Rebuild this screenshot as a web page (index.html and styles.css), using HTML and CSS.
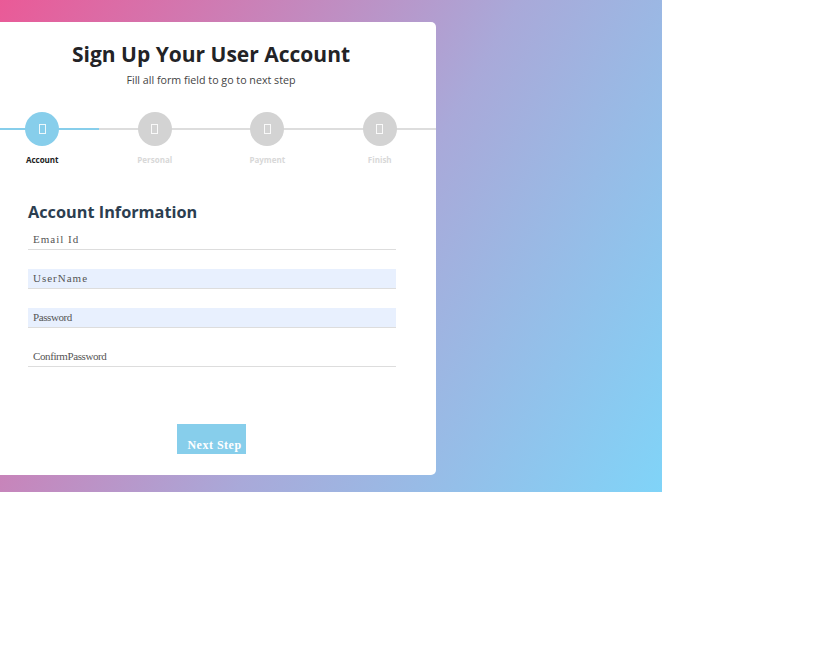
FILE: index.html
```html
<!DOCTYPE html>
<html lang="en">
<head>
    <meta charset="UTF-8">
    <meta name="viewport" content="width=device-width, initial-scale=1.0">
    <title>Sign Up Your User Account</title>
    <link rel="stylesheet" href="styles.css">
</head>
<body>
    <div class="wrapper">
        <div class="card">
            <h2 class="title">Sign Up Your User Account</h2>
            <p class="subtitle">Fill all form field to go to next step</p>

            <ul class="progressbar">
                <li class="active"><span class="step"><i class="icon"></i></span><strong>Account</strong></li>
                <li><span class="step"><i class="icon"></i></span><strong>Personal</strong></li>
                <li><span class="step"><i class="icon"></i></span><strong>Payment</strong></li>
                <li><span class="step"><i class="icon"></i></span><strong>Finish</strong></li>
            </ul>

            <form class="form-card">
                <h2 class="fs-title">Account Information</h2>
                <input type="email" name="email" placeholder="Email Id">
                <input type="text" name="uname" class="filled" placeholder="UserName">
                <input type="text" name="pwd" class="filled tight" placeholder="Password">
                <input type="text" name="cpwd" class="tight" placeholder="ConfirmPassword">
                <div class="actions">
                    <button type="button" class="next">Next Step</button>
                </div>
            </form>
        </div>
    </div>
</body>
</html>
```

FILE: styles.css
```css
body {
    margin: 0;
    padding: 0;
    font-family: "Open Sans", sans-serif;
    background: #fff;
}

.wrapper {
    width: 662px;
    height: 492px;
    overflow: hidden;
    padding-top: 22px;
    box-sizing: border-box;
    background: linear-gradient(120deg, #ea5a97 0%, #a9a9d9 55%, #80d4f8 100%);
}

.card {
    width: 450px;
    height: 453px;
    margin-left: -14px;
    background: #fff;
    border-radius: 5px;
    box-sizing: border-box;
    padding-top: 17px;
}

.title {
    margin: 0;
    text-align: center;
    font-size: 21px;
    font-weight: 700;
    color: #232326;
    line-height: 30px;
}

.subtitle {
    margin: 3px 0 0;
    text-align: center;
    font-size: 10.7px;
    color: #444;
    line-height: 16px;
}

.progressbar {
    list-style: none;
    margin: 24px 0 0;
    padding: 0;
    display: flex;
}

.progressbar li {
    width: 25%;
    display: flex;
    flex-direction: column;
    align-items: center;
    position: relative;
}

.progressbar li::before {
    content: "";
    position: absolute;
    left: 0;
    right: 0;
    top: 16px;
    height: 2px;
    background: #ddd;
}

.progressbar li.active::before {
    background: #87ceeb;
}

.step {
    width: 34px;
    height: 34px;
    border-radius: 50%;
    background: #d3d3d3;
    display: flex;
    align-items: center;
    justify-content: center;
    position: relative;
    z-index: 1;
}

.progressbar li.active .step {
    background: #87ceeb;
}

.icon {
    width: 5px;
    height: 8px;
    border: 1px solid #fff;
    opacity: 0.85;
}

.progressbar strong {
    margin-top: 8px;
    font-family: "Open Sans", sans-serif;
    font-size: 8px;
    font-weight: 700;
    color: #d8d8d8;
    line-height: 12px;
}

.progressbar li.active strong {
    color: #222;
}

.form-card {
    padding: 35px 40px 0 42px;
    display: flex;
    flex-direction: column;
}

.fs-title {
    margin: 0 0 7px;
    font-size: 16.3px;
    font-weight: 700;
    color: #2c3e50;
    line-height: 22px;
}

input {
    height: 17px;
    margin: 0 0 19px;
    padding: 0 5px 2px;
    border: none;
    border-bottom: 1px solid #ddd;
    font-family: "Liberation Serif", serif;
    font-size: 11px;
    letter-spacing: 1px;
    color: #444;
    background: #fff;
    outline: none;
    box-sizing: content-box;
    width: 358px;
}

input::placeholder {
    color: #555;
}

input.filled {
    background: #e8f0fe;
}

input.tight {
    letter-spacing: -0.4px;
}

.actions {
    display: flex;
    padding-left: 149px;
    margin-top: 38px;
}

.next {
    width: 69px;
    height: 30px;
    padding: 13px 0 0 6px;
    border: none;
    background: #87ceeb;
    color: #fff;
    font-family: "Liberation Serif", serif;
    font-weight: 700;
    font-size: 12px;
    letter-spacing: 0.5px;
    cursor: pointer;
}
```
